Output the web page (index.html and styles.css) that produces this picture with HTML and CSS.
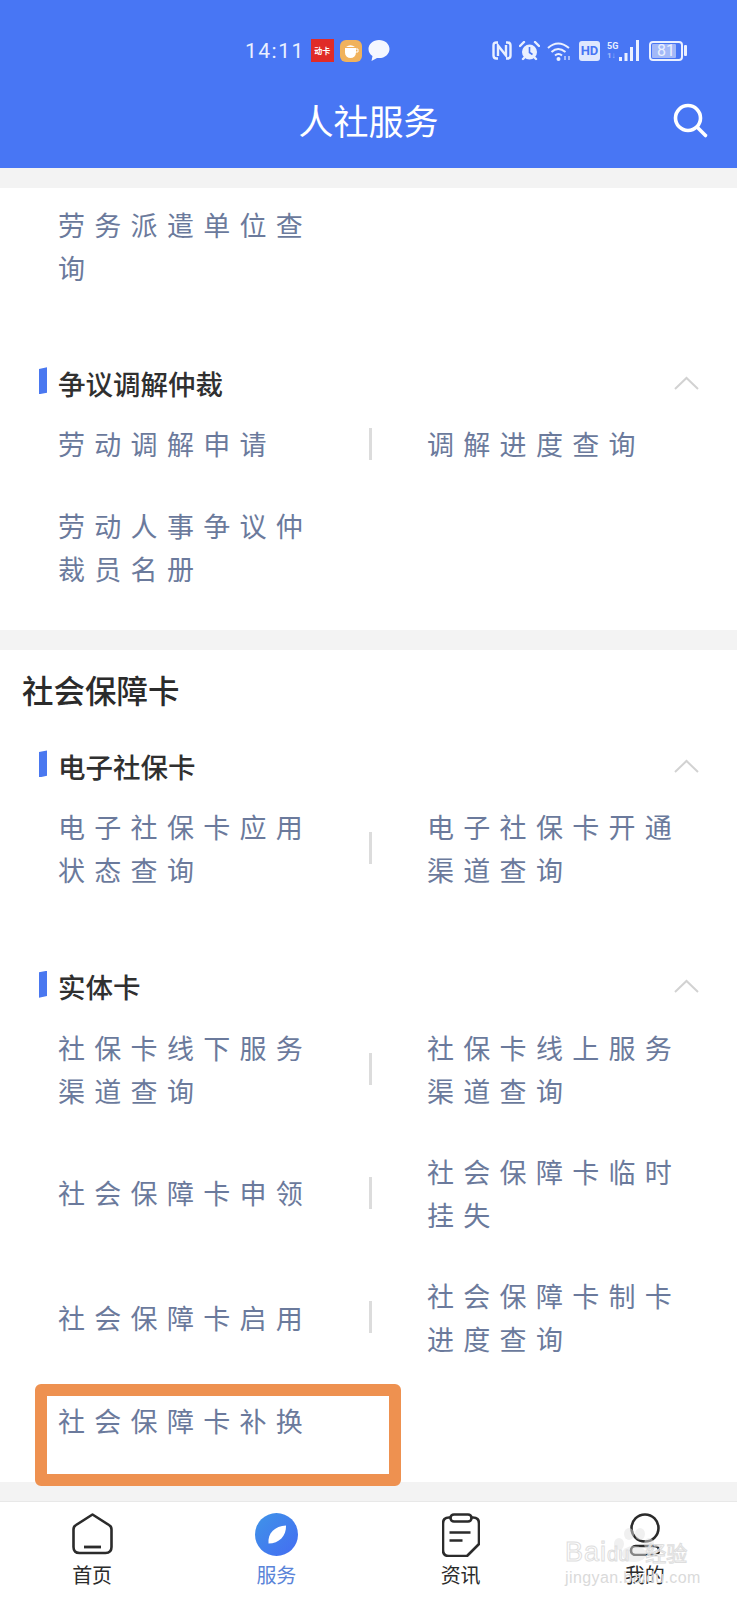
FILE: index.html
```html
<!DOCTYPE html>
<html lang="zh-CN">
<head>
  <meta charset="UTF-8">
  <meta name="viewport" content="width=device-width, initial-scale=1.0">
  <title>人社服务</title>
  <link rel="stylesheet" href="styles.css">
</head>
<body>
  <header class="top-bar">
    <div class="status-bar">
      <span class="time">14:11</span>
      <span class="app-badge">动卡</span>
      <svg class="st-icon" width="22" height="22" viewBox="0 0 22 22"><rect width="22" height="22" rx="6" fill="#f0b25c"/><path d="M5 8h11v4.500a5.500 5.500 0 0 1-11 0z" fill="#fff"/><path d="M6 7q4.500-3.500 9 0z" fill="#fff"/><path d="M16 9h2v3h-2" fill="none" stroke="#fff" stroke-width="1"/></svg>
      <svg class="st-icon" width="22" height="21" viewBox="0 0 22 21"><path d="M11 0C5 0 .5 4 .5 9c0 3 1.500 5.500 4 7l-1 5 5.500-3c.6.1 1.300.1 2 .1 6 0 10.500-4 10.500-9.100S17 0 11 0z" fill="#f4f7ff"/></svg>
      <div class="status-right">
        <svg width="20" height="19" viewBox="0 0 20 19"><g fill="none" stroke="#eaf0ff" stroke-width="2.400"><path d="M6 1.500H4.500q-3 0-3 3v10q0 3 3 3H6"/><path d="M14 1.500h1.500q3 0 3 3v10q0 3-3 3H14"/><path d="M6 15V4.500l8 10V4"/></g></svg>
        <svg width="21" height="20" viewBox="0 0 21 20"><circle cx="10.500" cy="11" r="7.500" fill="#eaf0ff"/><path d="M10.500 6v5.500l3 2" fill="none" stroke="#4876f4" stroke-width="1.600"/><path d="M1 5l4-4M20 5l-4-4M4 18l2-2M17 18l-2-2" stroke="#eaf0ff" stroke-width="2.400" stroke-linecap="round"/></svg>
        <svg width="25" height="20" viewBox="0 0 25 20"><g fill="none" stroke="#eaf0ff" stroke-width="2"><path d="M1 7q10-9 21 0"/><path d="M4.500 11q6.500-6 14 0"/><path d="M8 14.500q3.500-3 7 0"/></g><circle cx="11.500" cy="18" r="2" fill="#eaf0ff"/><path d="M18 19v-4M22 15v4" stroke="#c5d4fb" stroke-width="1.500"/></svg>
        <span class="hd">HD</span>
        <span class="net"><span class="net-5g">5G</span><span class="net-sub">1↓</span></span>
        <svg class="bars" width="22" height="21" viewBox="0 0 22 21"><path d="M1 17h3v4H1zM6.500 13h3v8h-3zM12 7h3v14h-3zM18 0h3v21h-3z" fill="#eaf0ff"/></svg>
        <div class="battery"><span class="battery-fill"></span><span class="battery-num">81</span></div>
        <span class="battery-cap"></span>
      </div>
    </div>
    <div class="title-row">
      <h1>人社服务</h1>
      <svg class="search" width="36" height="36" viewBox="0 0 36 36"><circle cx="15" cy="15" r="12.500" fill="none" stroke="#fff" stroke-width="3.600"/><path d="M24.500 24.500l8 8" stroke="#fff" stroke-width="3.600" stroke-linecap="round"/></svg>
    </div>
  </header>

  <main class="content">
    <section class="card card-scrolled">
      <div class="group group-first">
        <div class="row">
          <div class="item">劳务派遣单位查询</div>
        </div>
      </div>
      <div class="group">
        <div class="group-head">
          <span class="mark"></span>
          <h3>争议调解仲裁</h3>
          <svg class="chev" width="25" height="14" viewBox="0 0 25 14"><path d="M1 13L12.500 2 24 13" fill="none" stroke="#d2d2d2" stroke-width="2"/></svg>
        </div>
        <div class="row">
          <div class="item">劳动调解申请</div>
          <span class="sep"></span>
          <div class="item">调解进度查询</div>
        </div>
        <div class="row">
          <div class="item">劳动人事争议仲裁员名册</div>
        </div>
      </div>
    </section>

    <section class="card">
      <h2 class="card-title">社会保障卡</h2>
      <div class="group">
        <div class="group-head">
          <span class="mark"></span>
          <h3>电子社保卡</h3>
          <svg class="chev" width="25" height="14" viewBox="0 0 25 14"><path d="M1 13L12.500 2 24 13" fill="none" stroke="#d2d2d2" stroke-width="2"/></svg>
        </div>
        <div class="row">
          <div class="item">电子社保卡应用状态查询</div>
          <span class="sep"></span>
          <div class="item">电子社保卡开通渠道查询</div>
        </div>
      </div>
      <div class="group">
        <div class="group-head">
          <span class="mark"></span>
          <h3>实体卡</h3>
          <svg class="chev" width="25" height="14" viewBox="0 0 25 14"><path d="M1 13L12.500 2 24 13" fill="none" stroke="#d2d2d2" stroke-width="2"/></svg>
        </div>
        <div class="row">
          <div class="item">社保卡线下服务渠道查询</div>
          <span class="sep"></span>
          <div class="item">社保卡线上服务渠道查询</div>
        </div>
        <div class="row">
          <div class="item">社会保障卡申领</div>
          <span class="sep"></span>
          <div class="item">社会保障卡临时挂失</div>
        </div>
        <div class="row">
          <div class="item">社会保障卡启用</div>
          <span class="sep"></span>
          <div class="item">社会保障卡制卡进度查询</div>
        </div>
        <div class="row">
          <div class="item item-marked">社会保障卡补换<span class="highlight"></span></div>
        </div>
      </div>
    </section>
  </main>

  <nav class="tabs">
    <a class="tab">
      <svg width="41" height="42" viewBox="0 0 41 42"><path d="M20.500 1.500L37 12q2.500 1.500 2.500 4.500V34q0 6-6 6H7.500q-6 0-6-6V16.500q0-3 2.500-4.500z" fill="none" stroke="#2b2b2b" stroke-width="2.600" stroke-linejoin="round"/><path d="M12 34h17" stroke="#2b2b2b" stroke-width="2.800"/></svg>
      <span>首页</span>
    </a>
    <a class="tab tab-active">
      <svg width="43" height="43" viewBox="0 0 43 43"><defs><linearGradient id="compass" x1="0" y1="0" x2="1" y2="1"><stop offset="0" stop-color="#3f94e8"/><stop offset="1" stop-color="#446cf2"/></linearGradient></defs><circle cx="21.500" cy="21.500" r="21.500" fill="url(#compass)"/><path d="M13.500 30.500C12.500 20 20 13 31 12.500 31.500 23 24 30.500 13.500 30.500z" fill="#fff"/></svg>
      <span>服务</span>
    </a>
    <a class="tab">
      <svg width="38" height="44" viewBox="0 0 38 44"><path d="M9 4.500H7q-6 0-6 6V37q0 6 6 6h18l12-12V10.500q0-6-6-6h-2" fill="none" stroke="#2b2b2b" stroke-width="2.600" stroke-linejoin="round"/><rect x="8.500" y="1.500" width="21" height="7" rx="3.500" fill="none" stroke="#2b2b2b" stroke-width="2.600"/><path d="M7.500 19.500h21M7.500 27.500h13" stroke="#2b2b2b" stroke-width="2.600"/></svg>
      <span>资讯</span>
    </a>
    <a class="tab">
      <svg width="32" height="43" viewBox="0 0 32 43"><circle cx="16" cy="15" r="13.500" fill="none" stroke="#2b2b2b" stroke-width="2.600"/><rect x="2" y="33" width="28" height="9" rx="4.500" fill="none" stroke="#2b2b2b" stroke-width="2.600"/></svg>
      <span>我的</span>
    </a>
    <div class="watermark">
      <svg class="wm-paw-icon" width="46" height="34" viewBox="0 0 46 34"><g fill="rgba(225,225,225,0.5)"><ellipse cx="8" cy="16" rx="5" ry="6"/><ellipse cx="18" cy="6" rx="5" ry="6"/><ellipse cx="29" cy="6" rx="5" ry="6"/><ellipse cx="38" cy="16" rx="5" ry="6"/><ellipse cx="23" cy="26" rx="12" ry="8"/></g></svg>
      <div class="wm-logo">Bai<span class="wm-du">du</span><span class="wm-cn">经验</span></div>
      <div class="wm-url">jingyan.baidu.com</div>
    </div>
  </nav>
</body>
</html>
```

FILE: styles.css
```css
* {
  box-sizing: border-box;
}

body {
  margin: 0;
  height: 1600px;
  display: flex;
  flex-direction: column;
  overflow: hidden;
  background: #f3f3f3;
  font-family: "Noto Sans CJK SC", "Noto Sans", sans-serif;
}

/* top bar */
.top-bar {
  height: 168px;
  background: #4876f4;
  color: #fff;
}

.status-bar {
  height: 72px;
  padding: 29px 0 0 245px;
  display: flex;
  align-items: center;
  color: #eaf0ff;
}

.time {
  font-family: Roboto, sans-serif;
  font-size: 21px;
  letter-spacing: 1.5px;
  margin-right: 6px;
}

.app-badge {
  width: 23px;
  height: 23px;
  margin-right: 6px;
  background: #e02b27;
  color: #fff;
  font-size: 8px;
  line-height: 23px;
  text-align: center;
  font-weight: 700;
}

.st-icon {
  margin-right: 6px;
}

.status-right {
  margin-left: auto;
  padding-right: 50px;
  display: flex;
  align-items: center;
  gap: 7px;
}

.hd {
  width: 21px;
  height: 20px;
  background: #dfe8fe;
  border-radius: 3px;
  color: #4876f4;
  font-family: Roboto, sans-serif;
  font-size: 13px;
  font-weight: 700;
  line-height: 20px;
  text-align: center;
}

.net {
  width: 11px;
  display: flex;
  flex-direction: column;
  font-family: Roboto, sans-serif;
  font-weight: 700;
  line-height: 10px;
}

.net-5g {
  font-size: 9px;
}

.net-sub {
  font-size: 8px;
  color: #a9bffa;
}

.bars {
  margin-left: -7px;
}

.battery {
  position: relative;
  width: 34px;
  height: 20px;
  margin-left: 2px;
  border: 2px solid #eaf0ff;
  border-radius: 4px;
  font-family: Roboto, sans-serif;
  font-size: 16px;
  line-height: 16px;
  text-align: center;
}

.battery-fill {
  position: absolute;
  left: 1px;
  top: 1px;
  bottom: 1px;
  width: 24px;
  background: #a3b9f8;
  border-radius: 1px;
}

.battery-num {
  position: relative;
}

.battery-cap {
  width: 3px;
  height: 11px;
  margin-left: -6px;
  background: #eaf0ff;
  border-radius: 1px;
}

.title-row {
  position: relative;
  height: 96px;
  padding-top: 24px;
  text-align: center;
}

h1 {
  margin: 0;
  font-size: 35px;
  font-weight: 400;
  line-height: 48px;
}

.search {
  position: absolute;
  right: 28px;
  top: 31px;
}

/* lists */
.content {
  flex: 1;
}

.card {
  margin-top: 20px;
  padding-bottom: 2px;
  background: #fff;
  display: flow-root;
}

.card-scrolled {
  padding-top: 15px;
}

.card-title {
  margin: 0;
  padding: 19.5px 0 0 22px;
  font-size: 31.5px;
  font-weight: 500;
  line-height: 40px;
  color: #2b2b2b;
}

.group {
  margin-top: 39.5px;
  display: flow-root;
}

.group-first {
  margin-top: 0;
  margin-bottom: -1px;
}

.group-head {
  height: 34px;
  margin-bottom: 22.5px;
  padding: 0 38px 0 39px;
  display: flex;
  align-items: center;
}

.group-head h3 {
  margin: 0;
  font-size: 27.5px;
  font-weight: 500;
  color: #303030;
  flex: 1;
}

.mark {
  width: 8px;
  height: 27px;
  margin: -4px 11px 0 0;
  background: #4a78f0;
  clip-path: polygon(0 6%, 100% 0, 100% 94%, 0 100%);
}

.row {
  margin-bottom: 38.3px;
  padding-left: 58px;
  display: flex;
  align-items: center;
}

.item {
  width: 260px;
  font-size: 27px;
  line-height: 43px;
  letter-spacing: 9.3px;
  color: #6b7a9c;
}

.item-marked {
  position: relative;
}

.highlight {
  position: absolute;
  left: -23px;
  top: -15px;
  width: 366px;
  height: 102px;
  border: 12px solid #ee9150;
  border-radius: 6px;
}

.sep {
  width: 3px;
  height: 32px;
  margin: 0 55px 0 51px;
  background: #dcdcdc;
}

/* bottom tabs */
.tabs {
  position: relative;
  height: 99px;
  padding-top: 11px;
  display: grid;
  grid-template-columns: repeat(4, 1fr);
  background: #fff;
  border-top: 1px solid #e8e8e8;
}

.tab {
  display: flex;
  flex-direction: column;
  align-items: center;
  justify-content: space-between;
  height: 76px;
  font-size: 20px;
  line-height: 28px;
  color: #2b2b2b;
}

.tab-active {
  color: #5a84d8;
}

.watermark {
  position: absolute;
  left: 565px;
  top: 36px;
  width: 132px;
  font-family: "Liberation Sans", sans-serif;
  pointer-events: none;
}

.wm-paw-icon {
  position: absolute;
  left: 46px;
  top: -10px;
}

.wm-logo {
  position: relative;
  height: 28px;
  font-size: 27px;
  line-height: 28px;
  letter-spacing: 1px;
  white-space: nowrap;
  color: rgba(255, 255, 255, 0.5);
  -webkit-text-stroke: 1px #dedede;
}

.wm-du {
  letter-spacing: 0;
  margin-right: 16px;
  font-size: 20px;
}

.wm-cn {
  font-family: "Noto Sans CJK SC", sans-serif;
  font-size: 21px;
  letter-spacing: 0;
}

.wm-url {
  color: #dadada;
  font-size: 16px;
  line-height: 24px;
  letter-spacing: 0.4px;
  white-space: nowrap;
}
```
